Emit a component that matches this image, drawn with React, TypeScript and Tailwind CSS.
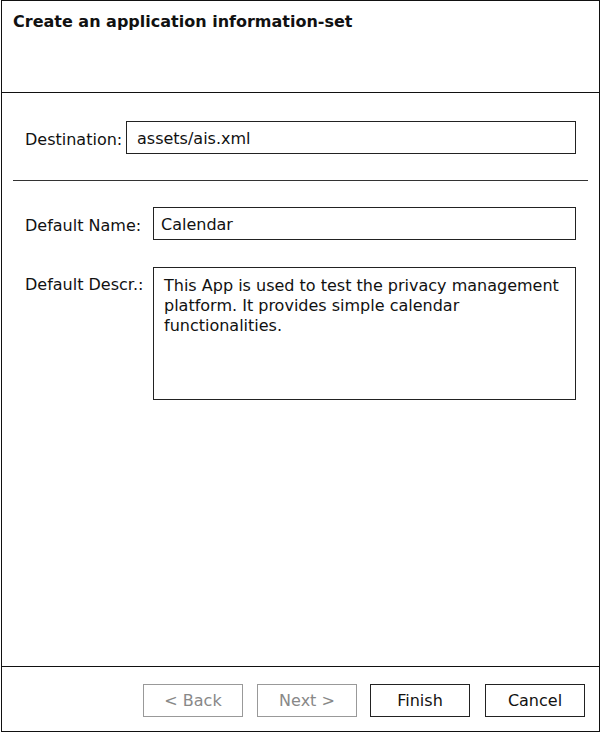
import React from "react";

const font = { fontFamily: '"DejaVu Sans", Verdana, sans-serif' };

export default function App() {
  return (
    <div className="bg-white w-[601px] h-[733px]" style={font}>
      <div className="ml-[1px] w-[599px] h-[732px] border border-[#111] flex flex-col text-[16px] text-[#111]">
        {/* Header */}
        <div className="h-[92px] border-b border-[#111] pl-[11px] pt-[11px] shrink-0">
          <div className="font-bold text-[16px] leading-[19px]">Create an application information-set</div>
        </div>

        {/* Body */}
        <div className="flex-1 flex flex-col">
          <div className="flex items-center mt-[28px] pl-[23px] pr-[23px]">
            <span className="leading-[20px] w-[101px] shrink-0 pt-[4px]">Destination:</span>
            <div className="flex-1 h-[33px] border border-[#222] flex items-center pl-[10px] pt-[3px] leading-[20px]">
              assets/ais.xml
            </div>
          </div>

          <div className="mt-[26px] mx-[11px] border-t border-[#333]" />

          <div className="flex items-center mt-[26px] pl-[23px] pr-[23px]">
            <span className="leading-[20px] w-[128px] shrink-0 pt-[4px]">Default Name:</span>
            <div className="flex-1 h-[33px] border border-[#222] flex items-center pl-[7px] pt-[3px] leading-[20px]">
              Calendar
            </div>
          </div>

          <div className="flex items-start mt-[27px] pl-[23px] pr-[23px]">
            <span className="leading-[20px] w-[128px] shrink-0 pt-[8px]">Default Descr.:</span>
            <div className="flex-1 h-[133px] border border-[#222] pl-[10px] pr-[8px] pt-[8px] leading-[20px]">
              This App is used to test the privacy management platform. It provides simple calendar functionalities.
            </div>
          </div>
        </div>

        {/* Footer */}
        <div className="h-[65px] border-t border-[#111] shrink-0 flex justify-end items-start pt-[17px] pr-[14px]">
          <div className="w-[100px] h-[33px] border border-[#999] text-[#888] flex items-center justify-center">&lt; Back</div>
          <div className="ml-[14px] w-[100px] h-[33px] border border-[#999] text-[#888] flex items-center justify-center">Next &gt;</div>
          <div className="ml-[13px] w-[100px] h-[33px] border border-[#222] text-[#111] flex items-center justify-center">Finish</div>
          <div className="ml-[15px] w-[100px] h-[33px] border border-[#222] text-[#111] flex items-center justify-center">Cancel</div>
        </div>
      </div>
    </div>
  );
}
